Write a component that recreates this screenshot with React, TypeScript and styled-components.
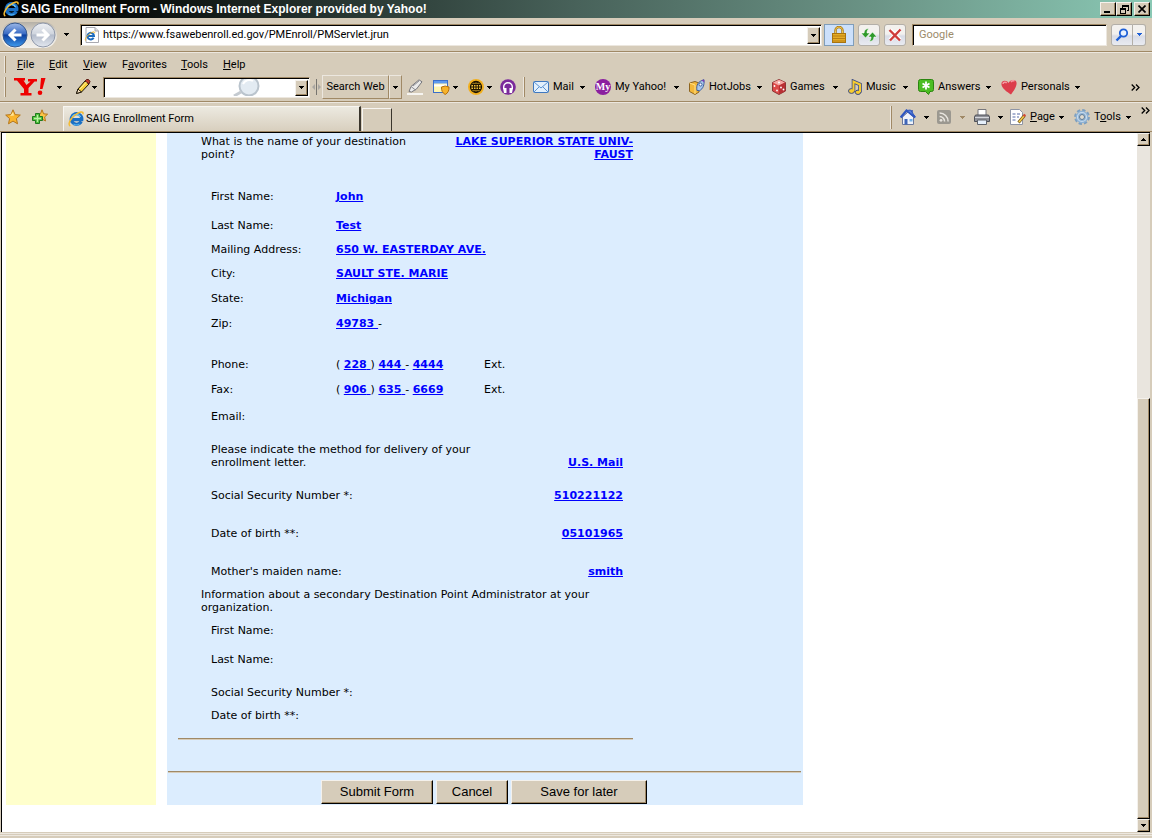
import React from "react";
import styled, { createGlobalStyle, css } from "styled-components";

const face = "#d6ccba";
const shade = "#a08966";
const light = "#ece7df";
const ui = `Roboto, "Liberation Sans", sans-serif`;
const verdana = `Verdana, "DejaVu Sans", sans-serif`;

const Global = createGlobalStyle`
  * { box-sizing: border-box; }
  body { margin: 0; background: ${face}; }
  button, input { font: inherit; color: inherit; margin: 0; padding: 0; border-radius: 0; }
  svg { display: block; flex: none; }
`;

const Window = styled.div`
  min-height: 100vh;
  display: flex;
  flex-direction: column;
  background: ${face};
  color: #000;
  font: 11px/16px ${ui};
`;

/* ---------- window chrome ---------- */

const TitleBar = styled.header`
  display: flex;
  align-items: center;
  height: 18px;
  padding: 0 2px 0 3px;
  gap: 2px;
  background: linear-gradient(90deg, #000 0, #0a0e0c 12%, #48625a 50%, #6b9486 76%, #8ac8b4 100%);
  color: #fff;
`;

const Title = styled.h1`
  flex: 1;
  margin: 0;
  font: bold 12px/16px "Liberation Sans", Arial, sans-serif;
  white-space: nowrap;
`;

const raised = css`
  background: ${face};
  border: 1px solid;
  border-color: #f4f1ec #000 #000 #f4f1ec;
  box-shadow: inset -1px -1px 0 ${shade};
`;

const CaptionButton = styled.button<{ $gap?: boolean }>`
  ${raised}
  display: flex;
  align-items: center;
  justify-content: center;
  width: 16px;
  height: 14px;
  margin-left: ${(p) => (p.$gap ? 0 : -2)}px;
`;

const rule = css`
  border-bottom: 1px solid ${shade};
  box-shadow: 0 1px 0 ${light};
`;

const AddressBar = styled.div`
  ${rule}
  display: flex;
  align-items: center;
  height: 34px;
  padding: 0 6px 0 1px;
`;

const NavPill = styled.div`
  display: flex;
  gap: 2px;
  padding: 0 1px;
  border-radius: 14px;
  background: linear-gradient(#b5b0a6, #e4e0d9 50%, #f3f1ed);
`;

const PlainButton = styled.button<{ $ml?: number; $w?: number }>`
  display: flex;
  align-items: center;
  justify-content: center;
  flex: none;
  width: ${(p) => (p.$w ? p.$w + "px" : "auto")};
  margin-left: ${(p) => p.$ml ?? 0}px;
  background: none;
  border: 0;
`;

const sunken = css`
  background: #fff;
  border: 1px solid;
  border-color: ${shade} ${light} ${light} ${shade};
  box-shadow: inset 1px 1px 0 #000;
`;

const Field = styled.div<{ $grow?: boolean; $w?: number; $h?: number; $ml?: number }>`
  ${sunken}
  display: flex;
  align-items: center;
  flex: ${(p) => (p.$grow ? "1 1 0" : "none")};
  min-width: 0;
  width: ${(p) => (p.$w ? p.$w + "px" : "auto")};
  height: ${(p) => p.$h ?? 22}px;
  margin-left: ${(p) => p.$ml ?? 0}px;
  padding: 2px 1px 1px 3px;
`;

const TextBox = styled.input`
  flex: 1;
  min-width: 0;
  height: 16px;
  padding-left: 3px;
  border: 0;
  outline: 0;
  background: transparent;
  &::placeholder { color: #9c8b6b; opacity: 1; }
`;

const GlassMark = styled.span`
  margin-right: 34px;
`;

const DropButton = styled.button`
  ${raised}
  display: flex;
  align-items: center;
  justify-content: center;
  align-self: stretch;
  width: 13px;
`;

const LockButton = styled.button`
  display: flex;
  align-items: center;
  justify-content: center;
  width: 30px;
  height: 22px;
  margin: 0 4px 0 2px;
  background: #cce0fb;
  border: 1px solid #7f9db9;
`;

const GlossButton = styled.button<{ $w?: number; $ml?: number; $side?: "l" | "r" }>`
  display: flex;
  align-items: center;
  justify-content: center;
  width: ${(p) => p.$w ?? 22}px;
  height: 22px;
  margin-left: ${(p) => p.$ml ?? 0}px;
  border: 1px solid #b3afa8;
  border-left-width: ${(p) => (p.$side === "r" ? 0 : 1)}px;
  border-radius: ${(p) => (p.$side === "l" ? "3px 0 0 3px" : p.$side === "r" ? "0 3px 3px 0" : "3px")};
  background: linear-gradient(#f3f1ee 0 45%, #d9dce6 55%, #e9ebf1);
`;

const MenuBar = styled.nav`
  display: flex;
  align-items: center;
  height: 25px;
  padding-left: 4px;
`;

const Grip = styled.span<{ $h?: number; $ml?: number }>`
  flex: none;
  width: 2px;
  height: ${(p) => p.$h ?? 17}px;
  margin-left: ${(p) => p.$ml ?? 0}px;
  border-left: 1px solid ${light};
  border-right: 1px solid ${shade};
`;

const MenuItem = styled.button<{ $w: number }>`
  width: ${(p) => p.$w}px;
  border: 0;
  background: none;
  text-align: left;
`;

const MenuItems = styled.div`
  display: flex;
  padding-left: 11px;
`;

const YahooBar = styled.div`
  ${rule}
  display: flex;
  align-items: center;
  height: 25px;
  padding: 0 12px 4px 4px;
`;

const Services = styled.div`
  display: flex;
  padding-left: 8px;
`;

const ToolItem = styled.button<{ $w: number }>`
  display: flex;
  align-items: center;
  gap: 4px;
  width: ${(p) => p.$w}px;
  padding-right: 10px;
  border: 0;
  background: none;
  white-space: nowrap;
  svg:last-child { margin-left: auto; }
`;

const EtchedButton = styled.button<{ $w: number; $ml?: number }>`
  display: flex;
  align-items: center;
  justify-content: center;
  flex: none;
  width: ${(p) => p.$w}px;
  height: 24px;
  margin-left: ${(p) => p.$ml ?? 0}px;
  border: 1px solid;
  border-color: ${light} ${shade} ${shade} ${light};
  background: none;
  white-space: nowrap;
`;

const Chevron = styled.button<{ $top?: boolean }>`
  align-self: ${(p) => (p.$top ? "flex-start" : "auto")};
  padding-top: ${(p) => (p.$top ? 4 : 0)}px;
  margin-left: auto;
  border: 0;
  background: none;
`;

const TabBar = styled.div`
  display: flex;
  align-items: flex-end;
  height: 30px;
  padding: 0 2px 0 5px;
  border-bottom: 1px solid ${shade};
`;

const BarSide = styled.div`
  display: flex;
  align-items: center;
  height: 28px;
  &:first-child { gap: 11px; padding-right: 15px; }
  &:last-child { margin-left: auto; }
`;

const Tab = styled.button<{ $w: number; $h: number; $active?: boolean }>`
  display: flex;
  align-items: center;
  gap: 2px;
  width: ${(p) => p.$w}px;
  height: ${(p) => p.$h}px;
  padding-left: 4px;
  margin-right: ${(p) => (p.$active ? 1 : 0)}px;
  border: 1px solid;
  border-color: #f7f5f1 #3a352c transparent #f7f5f1;
  border-right-width: ${(p) => (p.$active ? 2 : 1)}px;
  border-bottom: 0;
  background: ${(p) => (p.$active ? "linear-gradient(#ece9e0, #d8cfbe)" : face)};
`;

/* ---------- page ---------- */

const Viewport = styled.div`
  flex: 1;
  display: flex;
  margin: 0 2px 0 1px;
  border-top: 1px solid #000;
  border-left: 1px solid #000;
  background: #fff;
`;

const Page = styled.main`
  flex: 1;
  display: flex;
  gap: 11px;
  min-width: 0;
  padding: 0 0 27px 4px;
  font: 11px/13px ${verdana};
`;

const SideColumn = styled.aside`
  flex: 0 0 150px;
  background: #ffc;
`;

const Panel = styled.form`
  flex: 0 1 636px;
  min-width: 0;
  padding: 2px 2px 1px 1px;
  background: #dcedfe;
`;

const Section = styled.section`
  max-width: 465px;
  padding: 0 0 0 10px;
`;

const Question = styled.div<{ $gap?: number; $inset?: number }>`
  display: flex;
  justify-content: space-between;
  align-items: flex-end;
  margin: ${(p) => p.$gap ?? 0}px ${(p) => p.$inset ?? 0}px 0 ${(p) => (p.$inset ? 33 : 23)}px;
`;

const Prompt = styled.span<{ $w?: number }>`
  width: ${(p) => (p.$w ? p.$w + "px" : "auto")};
`;

const Answer = styled.span<{ $w?: number }>`
  width: ${(p) => (p.$w ? p.$w + "px" : "auto")};
  text-align: right;
`;

const Link = styled.a`
  color: #00f;
  font-weight: bold;
  text-decoration: underline;
`;

const FieldRow = styled.div<{ $gap: number }>`
  display: grid;
  grid-template-columns: 125px 148px 1fr;
  margin: ${(p) => p.$gap}px 0 0 33px;
  white-space: nowrap;
`;

const Rule = styled.hr<{ $gap: number }>`
  height: 2px;
  margin: ${(p) => p.$gap}px 0 0;
  border: 0;
  border-top: 1px solid ${shade};
  background: ${face};
`;

const Actions = styled.div`
  display: flex;
  gap: 3px;
  padding: 7px 0 0 153px;
`;

const ActionButton = styled.button<{ $w: number }>`
  ${raised}
  width: ${(p) => p.$w}px;
  height: 24px;
  font: 13px/20px "Liberation Sans", Arial, sans-serif;
`;

const ScrollBar = styled.div`
  flex: none;
  display: flex;
  flex-direction: column;
  width: 13px;
  background: #e9e5de;
`;

const ScrollButton = styled.button`
  ${raised}
  display: flex;
  align-items: center;
  justify-content: center;
  height: 13px;
`;

const ScrollThumb = styled.div`
  ${raised}
  flex: 420 1 0;
`;

const ScrollSpace = styled.div`
  flex: 252 1 0;
`;

const StatusEdge = styled.footer`
  height: 6px;
  border-top: 1px solid ${face};
  background: linear-gradient(${light} 0 1px, ${face} 1px 2px, ${light} 2px 3px, ${face} 3px);
`;

/* ---------- icons ---------- */

const Arrow = ({ color = "#000", up = false }: { color?: string; up?: boolean }) => (
  <svg width="5" height="3" viewBox="0 0 5 3" shapeRendering="crispEdges">
    <path d={up ? "M2 0h1v1h1v1h1v1H0V2h1V1h1z" : "M0 0h5v1H4v1H3v1H2V2H1V1H0z"} fill={color} />
  </svg>
);

const IeIcon = () => (
  <svg width="16" height="16" viewBox="0 0 16 16">
    <path d="M13.200 10.500A5.300 5.300 0 1 1 13.800 8.600H5" fill="none" stroke="#1a6fc4" strokeWidth="3.200" />
    <path d="M12.600 5.800A5 5 0 0 0 4 6.200" fill="none" stroke="#6cc6f7" strokeWidth="1.400" />
    <path d="M5.500 13a5.500 5.500 0 0 0 6 0" fill="none" stroke="#4fb0ee" strokeWidth="1.200" />
    <path d="M2.300 15C-.6 13.600 2.400 7.400 7 4c4.200-3.200 8.900-4.600 7.900-.6" fill="none" stroke="#f5bb30" strokeWidth="1.500" />
  </svg>
);

const RoundArrow = ({ back }: { back?: boolean }) => (
  <svg width="26" height="26" viewBox="0 0 26 26">
    <defs>
      <linearGradient id={back ? "navBack" : "navNext"} x1="0" y1="0" x2="0" y2="1">
        <stop offset="0" stopColor={back ? "#9db9e8" : "#eef0f4"} />
        <stop offset=".45" stopColor={back ? "#3a6bc4" : "#d0d5de"} />
        <stop offset=".5" stopColor={back ? "#0d3f9e" : "#b4bccb"} />
        <stop offset="1" stopColor={back ? "#3f9df0" : "#e3e8f0"} />
      </linearGradient>
    </defs>
    <circle cx="13" cy="13" r="12" fill={`url(#${back ? "navBack" : "navNext"})`} stroke={back ? "#35588f" : "#8f98aa"} />
    <path
      d={back ? "M19.500 13H8M13.500 7.500L8 13l5.500 5.500" : "M6.500 13H18M12.500 7.500L18 13l-5.500 5.500"}
      fill="none"
      stroke="#fff"
      strokeWidth="3"
    />
  </svg>
);

const PageIeIcon = () => (
  <svg width="16" height="16" viewBox="0 0 16 16">
    <path d="M2 .5h9l3.500 3.500v11.500H2z" fill="#fff" stroke="#a9a9b0" />
    <path d="M11 .5V4h3.500" fill="#ddd" stroke="#a9a9b0" />
    <path d="M9.600 10.700A3.300 3.300 0 1 1 10 9H4" fill="none" stroke="#1c6cc0" strokeWidth="2" />
    <path d="M1.500 13.500c-1-2 3-7 7.500-8.500 1.500-.4 2 .2 1.500 1.300" fill="none" stroke="#f0b32a" />
  </svg>
);

const LockIcon = () => (
  <svg width="14" height="17" viewBox="0 0 14 17">
    <path d="M3.500 8V4.500a3.500 3.500 0 0 1 7 0V8" fill="none" stroke="#a87410" strokeWidth="2.400" />
    <path d="M3.500 8V4.500a3.500 3.500 0 0 1 7 0V8" fill="none" stroke="#f1c850" />
    <rect x=".5" y="7.500" width="13" height="9" fill="#e5ac24" stroke="#a87410" />
    <path d="M1 10h12M1 12.500h12M1 15h12" stroke="#b97f12" />
  </svg>
);

const RefreshIcon = () => (
  <svg width="18" height="16" viewBox="0 0 18 16">
    <path d="M9 1.500C6 1.500 4 3 4 6H1l4.500 5L10 6H7c0-2 .5-3 2-4.500z" fill="#2e9a2b" stroke="#fff" strokeWidth=".6" />
    <path d="M9 14.500c3 0 5-1.500 5-4.500h3l-4.500-5L8 10h3c0 2-.5 3-2 4.500z" fill="#2e9a2b" stroke="#fff" strokeWidth=".6" />
  </svg>
);

const StopIcon = () => (
  <svg width="14" height="14" viewBox="0 0 14 14">
    <path d="M2 2l10 10M12 2L2 12" stroke="#fff" strokeWidth="4" />
    <path d="M1.500 2l10.500 10.500M12.500 1.500L2 12.500" stroke="#cf3b3b" strokeWidth="2.400" />
  </svg>
);

const GlassIcon = () => (
  <svg width="14" height="14" viewBox="0 0 14 14">
    <circle cx="8.500" cy="5" r="3.700" fill="#e8f2ff" stroke="#1d5fd6" strokeWidth="1.800" />
    <path d="M6 8l-4.500 4.500" stroke="#1d5fd6" strokeWidth="2.400" />
  </svg>
);

const YahooLogo = () => (
  <svg width="32" height="18" viewBox="0 0 32 18">
    <path
      d="M0 0h11v2.500H9.500l3 4.500L16.500 3.500H14V1h9v2.500h-2.500L14.500 10v5h3v2.500H6.500V15h3.500v-4L3 2.500H0z"
      fill="#ee0000"
    />
    <path d="M27 0h4.500L28.500 11H26z" fill="#ee0000" />
    <ellipse cx="26" cy="14.800" rx="2.300" ry="2.200" fill="#ee0000" />
  </svg>
);

const PencilIcon = () => (
  <svg width="16" height="16" viewBox="0 0 16 16">
    <path d="M1.500 14.500l1.500-4.500L10 2l4 3-7.500 8z" fill="#f8cf38" stroke="#1c1408" />
    <path d="M10 2l1.500-1.500h2L15 2.500 14 5z" fill="#c23a2a" stroke="#5a1a10" />
    <path d="M1.500 14.500l1.500-4.500 3.500 3z" fill="#f5dfc0" stroke="#1c1408" />
    <path d="M4.500 10.500l7-7.500" stroke="#fff3a0" />
  </svg>
);

const SoftGlass = () => (
  <svg width="28" height="17" viewBox="0 0 28 17">
    <circle cx="16" cy="7" r="9.500" fill="#e3ebf2" stroke="#bac4cd" strokeWidth="2" />
    <path d="M10 5a7 7 0 0 1 10-3" fill="none" stroke="#fff" strokeWidth="2" />
    <path d="M8 13l-7 4" stroke="#c4cad0" strokeWidth="3" />
  </svg>
);

const SplitIcon = () => (
  <svg width="9" height="18" viewBox="0 0 9 18">
    <path d="M4.500 1v16" stroke="#77756f" />
    <path d="M3 6v6L0 9zM6 6v6l3-3z" fill="#aaa7a2" />
  </svg>
);

const HighlightIcon = () => (
  <svg width="16" height="16" viewBox="0 0 16 16">
    <path d="M2 12.500l2-5L12 .8l3 2L9.500 10l-5 3z" fill="#eaeaea" stroke="#77777c" />
    <path d="M4 7.500l4.500 3.500M6 7l6-5" stroke="#8e8e94" />
    <path d="M0 15h16" stroke="#f6f4f0" strokeWidth="2" />
  </svg>
);

const ShieldWindowIcon = () => (
  <svg width="17" height="16" viewBox="0 0 17 16">
    <rect x=".5" y="1.500" width="14" height="12" fill="#fdf4b0" stroke="#3b6ec9" />
    <path d="M1 2h13v2.500H1z" fill="#5e9af0" />
    <path d="M1 5.500h13v2H1z" fill="#fff" />
    <path d="M8.500 8l3.700-1 3.800 1c.2 3.500-1 6-3.800 7.500C9.500 14 8.300 11.500 8.500 8z" fill="#f7b32b" stroke="#b36f0c" />
  </svg>
);

const GlobeIcon = () => (
  <svg width="16" height="16" viewBox="0 0 16 16">
    <circle cx="8" cy="8" r="8" fill="#f2b01e" />
    <circle cx="8" cy="8" r="5.500" fill="#f7c53a" stroke="#1c1300" strokeWidth="1.300" />
    <path d="M8 2.500v11M2.500 8h11M3.500 5.500h9M3.500 10.500h9" stroke="#1c1300" />
    <ellipse cx="8" cy="8" rx="2.600" ry="5.500" fill="none" stroke="#1c1300" />
  </svg>
);

const HeadphoneIcon = () => (
  <svg width="16" height="16" viewBox="0 0 16 16">
    <circle cx="8" cy="8" r="7.800" fill="#7b2a9b" />
    <path d="M3.700 10V8a4.300 4.300 0 0 1 8.600 0v2" fill="none" stroke="#fff" strokeWidth="1.400" />
    <path d="M3 9h3.500v5H4zM13 9H9.500v5H12z" fill="#fff" />
  </svg>
);

const MailIcon = () => (
  <svg width="16" height="12" viewBox="0 0 16 12">
    <rect x=".5" y=".5" width="15" height="11" rx="1" fill="#e2f0fd" stroke="#3f78c0" />
    <path d="M1 1l7 6 7-6M1 11l5-5M15 11l-5-5" fill="none" stroke="#5b92d2" />
  </svg>
);

const MyIcon = () => (
  <svg width="16" height="16" viewBox="0 0 16 16">
    <circle cx="8" cy="8" r="8" fill="#8b1f9f" />
    <text x="8" y="11" fill="#fff" fontFamily="Liberation Serif, serif" fontWeight="bold" fontSize="10" textAnchor="middle">My</text>
  </svg>
);

const JobsIcon = () => (
  <svg width="16" height="16" viewBox="0 0 16 16">
    <path d="M.5 4L6 2.500 10 4v9l-4 2.500-5.500-3z" fill="#f3b738" stroke="#8d6420" />
    <path d="M.5 4L6 6v9" fill="none" stroke="#ffe08a" />
    <path d="M8 11.500C7 6 9 2.500 15 .7c.5 5-.8 9-4.500 11z" fill="#a9c8ec" stroke="#3d5f9d" />
    <circle cx="11.500" cy="5.500" r="1.500" fill="#fff" stroke="#3d5f9d" />
    <path d="M14.900.5l.6 3-3-2z" fill="#7b3db5" />
  </svg>
);

const DiceIcon = () => (
  <svg width="14" height="16" viewBox="0 0 14 16">
    <path d="M7 .5l6.500 3v8.500L7 15.500.5 12V3.500z" fill="#dc4a48" stroke="#8d3436" />
    <path d="M7 .7l6 2.800L7 6.500 1 3.500z" fill="#f6a8a4" />
    <path d="M7 6.500l6-3V12l-6 3.200z" fill="#b92f33" />
    <g fill="#fff">
      <circle cx="7" cy="3.500" r="1" />
      <circle cx="2.500" cy="7" r=".9" />
      <circle cx="5" cy="11.500" r=".9" />
      <circle cx="9" cy="8.500" r=".9" />
      <circle cx="11.500" cy="10.500" r=".9" />
    </g>
  </svg>
);

const MusicIcon = () => (
  <svg width="14" height="16" viewBox="0 0 14 16">
    <path d="M5.500 12.500V2.500l6.500 3v8" fill="none" stroke="#3c4c84" strokeWidth="3.600" />
    <ellipse cx="3.500" cy="12" rx="3" ry="2.400" fill="#f8cc2e" stroke="#3c4c84" />
    <ellipse cx="10" cy="13.300" rx="2.700" ry="2.200" fill="#f8cc2e" stroke="#3c4c84" />
    <path d="M5.500 12V2.500l6.500 3V13" fill="none" stroke="#f8cc2e" strokeWidth="2" />
  </svg>
);

const AnswersIcon = () => (
  <svg width="16" height="16" viewBox="0 0 16 16">
    <path d="M2.500.5h11a2 2 0 0 1 2 2v8a2 2 0 0 1-2 2H12l-1.500 3-3-3h-5a2 2 0 0 1-2-2v-8a2 2 0 0 1 2-2z" fill="#4bbd22" stroke="#2b8510" />
    <path d="M8 2.500v8M4.500 4.500l7 4M11.500 4.500l-7 4" stroke="#fff" strokeWidth="1.800" />
  </svg>
);

const HeartIcon = () => (
  <svg width="16" height="16" viewBox="0 0 16 16">
    <path d="M10 15.500C6 13 .5 9 .4 5 .4 1 6 .6 7.500 4 9 .4 15.500-.5 15.600 4c0 4-3 8-5.600 11.500z" fill="#dc3d4b" />
    <path d="M2 5c.3-2 2.500-2.300 3.800-1M10 3c1-1.500 2.500-1.500 3.500-1" fill="none" stroke="#f69aa2" strokeWidth="1.600" />
  </svg>
);

const StarIcon = () => (
  <svg width="16" height="16" viewBox="0 0 16 16">
    <path d="M8 .8l2.100 4.800 5.200.5-3.900 3.500 1.100 5.200L8 12.100l-4.500 2.700 1.100-5.200L.7 6.100l5.200-.5z" fill="#fbb52c" stroke="#b5761a" />
    <path d="M8 3l1 3.500-4 .5z" fill="#ffe69a" />
  </svg>
);

const AddStarIcon = () => (
  <svg width="16" height="16" viewBox="0 0 16 16">
    <path d="M10 .8l1.600 4 4 .4-3 2.700.9 4.100-3.500-2-4 2L7 8 4.500 5.200l4-.4z" fill="#fbc545" stroke="#b5761a" />
    <path d="M3.500 4.500h4v3h3v4h-3v3h-4v-3h-3v-4h3z" fill="#4fc23c" stroke="#1e7a1c" />
    <path d="M5.500 6v7M2 9.500h7" stroke="#b8f0a2" strokeWidth="1.300" />
  </svg>
);

const HomeIcon = () => (
  <svg width="16" height="16" viewBox="0 0 16 16">
    <path d="M2.500 8v7.500h11V8L8 3z" fill="#f1f3fa" stroke="#6a789c" />
    <path d="M12 1v4.500" stroke="#5a6fb0" strokeWidth="2" />
    <path d="M.7 8.500L6.500 1.500 15.300 8.500" fill="none" stroke="#2f56c0" strokeWidth="2.200" />
    <path d="M6.500 1.500l4-.5L15 7.500z" fill="#5a82dc" stroke="#2f56c0" />
    <path d="M4.500 10h3v5.500h-3z" fill="#3f66b8" />
    <path d="M9.500 10h3v2.500h-3z" fill="#6fb0e8" />
  </svg>
);

const FeedIcon = () => (
  <svg width="14" height="14" viewBox="0 0 14 14">
    <rect width="14" height="14" rx="2" fill="#9b9890" />
    <circle cx="4" cy="10.300" r="1.400" fill="#e9e6e0" />
    <path d="M2.600 6.500a5 5 0 0 1 5 5M2.600 3a8.500 8.500 0 0 1 8.500 8.500" fill="none" stroke="#e9e6e0" strokeWidth="1.500" />
  </svg>
);

const PrinterIcon = () => (
  <svg width="16" height="16" viewBox="0 0 16 16">
    <path d="M4 .5h8V7H4z" fill="#fff" stroke="#77777c" />
    <path d="M1.500 6h13l1 2v4.500H.5V8z" fill="#8f9198" stroke="#4f5158" />
    <path d="M1 8.500h14" stroke="#d4d6dc" />
    <path d="M3.500 11h9v4.500h-9z" fill="#e6f0fb" stroke="#60646c" />
  </svg>
);

const PageEditIcon = () => (
  <svg width="16" height="16" viewBox="0 0 16 16">
    <path d="M.5.500h9l3 3v12H.5z" fill="#fff" stroke="#8e95a5" />
    <path d="M2.500 5h3M2.500 8h3M2.500 11h3M7 5h3M7 8h2" stroke="#8f9cc4" strokeWidth="1.300" />
    <path d="M8.500 13.500l6-7" stroke="#7b5c1d" strokeWidth="3" />
    <path d="M9 13l5-6" stroke="#f7cf4a" strokeWidth="1.400" />
    <path d="M13.600 7.300L15.300 5.500" stroke="#d34b3a" strokeWidth="2.400" />
  </svg>
);

const GearIcon = () => (
  <svg width="16" height="16" viewBox="0 0 16 16">
    <circle cx="8" cy="8" r="6.800" fill="none" stroke="#7d9fc0" strokeWidth="2.200" strokeDasharray="3.340 2" />
    <circle cx="8" cy="8" r="4.500" fill="none" stroke="#8fb2d4" strokeWidth="3.400" />
    <circle cx="8" cy="8" r="4.500" fill="none" stroke="#c9dcee" strokeWidth="1.200" />
    <circle cx="8" cy="8" r="2.500" fill="#e2dccf" stroke="#567a9e" />
  </svg>
);

const DoubleChevron = () => (
  <svg width="9" height="7" viewBox="0 0 9 7">
    <path d="M.7.500l3 3-3 3M5 .5l3 3-3 3" fill="none" stroke="#000" strokeWidth="1.300" />
  </svg>
);

const MinimizeIcon = () => (
  <svg width="8" height="8" viewBox="0 0 8 8"><path d="M0 6h6v2H0z" /></svg>
);
const RestoreIcon = () => (
  <svg width="9" height="9" viewBox="0 0 9 9" shapeRendering="crispEdges">
    <path d="M2 0h7v6H7V5h1V2H3v1H2zM0 3h6v6H0zM1 5v3h4V5z" fillRule="evenodd" />
  </svg>
);
const CloseIcon = () => (
  <svg width="8" height="8" viewBox="0 0 8 8"><path d="M.5.500l7 7M7.500.500l-7 7" stroke="#000" strokeWidth="1.700" /></svg>
);

/* ---------- data ---------- */

const menus = [
  { pre: "", key: "F", post: "ile", w: 32 },
  { pre: "", key: "E", post: "dit", w: 34 },
  { pre: "", key: "V", post: "iew", w: 39 },
  { pre: "F", key: "a", post: "vorites", w: 59 },
  { pre: "", key: "T", post: "ools", w: 42 },
  { pre: "", key: "H", post: "elp", w: 40 },
];

const services = [
  { label: "Mail", icon: <MailIcon />, w: 62 },
  { label: "My Yahoo!", icon: <MyIcon />, w: 94 },
  { label: "HotJobs", icon: <JobsIcon />, w: 83 },
  { label: "Games", icon: <DiceIcon />, w: 76 },
  { label: "Music", icon: <MusicIcon />, w: 70 },
  { label: "Answers", icon: <AnswersIcon />, w: 83 },
  { label: "Personals", icon: <HeartIcon />, w: 89 },
];

const L = ({ children }: { children: React.ReactNode }) => <Link href="#">{children}</Link>;

const PhoneNumber = ({ parts }: { parts: [string, string, string] }) => (
  <span>
    ( <L>{parts[0]}&nbsp;</L>) <L>{parts[1]}&nbsp;</L>- <L>{parts[2]}</L>
  </span>
);

const contact: { label: string; value?: React.ReactNode; ext?: boolean; gap: number }[] = [
  { label: "First Name:", value: <L>John</L>, gap: 29 },
  { label: "Last Name:", value: <L>Test</L>, gap: 16 },
  { label: "Mailing Address:", value: <L>650 W. EASTERDAY AVE.</L>, gap: 11 },
  { label: "City:", value: <L>SAULT STE. MARIE</L>, gap: 11 },
  { label: "State:", value: <L>Michigan</L>, gap: 12 },
  { label: "Zip:", value: <span><L>49783&nbsp;</L>-</span>, gap: 12 },
  { label: "Phone:", value: <PhoneNumber parts={["228", "444", "4444"]} />, ext: true, gap: 28 },
  { label: "Fax:", value: <PhoneNumber parts={["906", "635", "6669"]} />, ext: true, gap: 12 },
  { label: "Email:", gap: 14 },
];

const identity = [
  { label: "Social Security Number *:", value: "510221122", gap: 20 },
  { label: "Date of birth **:", value: "05101965", gap: 25 },
  { label: "Mother's maiden name:", value: "smith", gap: 25 },
];

const secondary = [
  { label: "First Name:", gap: 10 },
  { label: "Last Name:", gap: 16 },
  { label: "Social Security Number *:", gap: 20 },
  { label: "Date of birth **:", gap: 10 },
];

export default function App() {
  return (
    <Window>
      <Global />
      <TitleBar>
        <IeIcon />
        <Title>SAIG Enrollment Form - Windows Internet Explorer provided by Yahoo!</Title>
        <CaptionButton aria-label="Minimize"><MinimizeIcon /></CaptionButton>
        <CaptionButton aria-label="Restore"><RestoreIcon /></CaptionButton>
        <CaptionButton aria-label="Close" $gap><CloseIcon /></CaptionButton>
      </TitleBar>

      <AddressBar>
        <NavPill>
          <PlainButton aria-label="Back"><RoundArrow back /></PlainButton>
          <PlainButton aria-label="Forward"><RoundArrow /></PlainButton>
        </NavPill>
        <PlainButton aria-label="Recent pages" $ml={5} $w={8}><Arrow /></PlainButton>
        <Field $grow $ml={10}>
          <PageIeIcon />
          <TextBox aria-label="Address" defaultValue="https://www.fsawebenroll.ed.gov/PMEnroll/PMServlet.jrun" />
          <DropButton aria-label="Show address list"><Arrow /></DropButton>
        </Field>
        <LockButton aria-label="Security report"><LockIcon /></LockButton>
        <GlossButton aria-label="Refresh"><RefreshIcon /></GlossButton>
        <GlossButton aria-label="Stop" $ml={4}><StopIcon /></GlossButton>
        <Field $w={195} $ml={6}>
          <TextBox aria-label="Search" placeholder="Google" />
        </Field>
        <GlossButton aria-label="Search" $ml={4} $side="l"><GlassIcon /></GlossButton>
        <GlossButton aria-label="Search options" $w={13} $side="r"><Arrow color="#1d5fd6" /></GlossButton>
      </AddressBar>

      <MenuBar>
        <Grip />
        <MenuItems>
          {menus.map((m) => (
            <MenuItem key={m.key} $w={m.w}>{m.pre}<u>{m.key}</u>{m.post}</MenuItem>
          ))}
        </MenuItems>
      </MenuBar>

      <YahooBar>
        <Grip $h={20} />
        <PlainButton aria-label="Yahoo" $ml={8}><YahooLogo /></PlainButton>
        <PlainButton aria-label="Yahoo menu" $w={27}><Arrow /></PlainButton>
        <PlainButton aria-label="Edit toolbar" $ml={2}><PencilIcon /></PlainButton>
        <PlainButton aria-label="Edit options" $w={7}><Arrow /></PlainButton>
        <Field $w={207} $h={21} $ml={5}>
          <TextBox aria-label="Yahoo search" />
          <GlassMark><SoftGlass /></GlassMark>
          <DropButton aria-label="Search history"><Arrow /></DropButton>
        </Field>
        <PlainButton aria-label="Resize search" $ml={2} $w={9}><SplitIcon /></PlainButton>
        <EtchedButton $w={67} $ml={1}>Search Web</EtchedButton>
        <EtchedButton $w={13} aria-label="Search Web options"><Arrow /></EtchedButton>
        <PlainButton aria-label="Highlight" $ml={5}><HighlightIcon /></PlainButton>
        <PlainButton aria-label="Pop-up blocker" $ml={10}><ShieldWindowIcon /></PlainButton>
        <PlainButton aria-label="Pop-up options" $w={11}><Arrow /></PlainButton>
        <PlainButton aria-label="Translate" $ml={7}><GlobeIcon /></PlainButton>
        <PlainButton aria-label="Translate options" $w={11}><Arrow /></PlainButton>
        <PlainButton aria-label="Audio" $ml={5}><HeadphoneIcon /></PlainButton>
        <Grip $h={20} $ml={7} />
        <Services>
          {services.map((s) => (
            <ToolItem key={s.label} $w={s.w}>{s.icon}{s.label}<Arrow /></ToolItem>
          ))}
        </Services>
        <Chevron aria-label="More"><DoubleChevron /></Chevron>
      </YahooBar>

      <TabBar>
        <BarSide>
          <PlainButton aria-label="Favorites Center"><StarIcon /></PlainButton>
          <PlainButton aria-label="Add to Favorites"><AddStarIcon /></PlainButton>
        </BarSide>
        <Tab $w={298} $h={25} $active><IeIcon />SAIG Enrollment Form</Tab>
        <Tab $w={30} $h={23} aria-label="New Tab" />
        <BarSide>
          <Grip $h={23} />
          <PlainButton aria-label="Home" $ml={8}><HomeIcon /></PlainButton>
          <PlainButton aria-label="Home options" $w={21}><Arrow /></PlainButton>
          <PlainButton aria-label="Feeds"><FeedIcon /></PlainButton>
          <PlainButton aria-label="Feed options" $w={23}><Arrow color={shade} /></PlainButton>
          <PlainButton aria-label="Print"><PrinterIcon /></PlainButton>
          <PlainButton aria-label="Print options" $w={20}><Arrow /></PlainButton>
          <ToolItem $w={64}><PageEditIcon /><span><u>P</u>age</span><Arrow /></ToolItem>
          <ToolItem $w={67}><GearIcon /><span>T<u>o</u>ols</span><Arrow /></ToolItem>
          <Chevron aria-label="More commands" $top><DoubleChevron /></Chevron>
        </BarSide>
      </TabBar>

      <Viewport>
        <Page>
          <SideColumn />
          <Panel onSubmit={(e) => e.preventDefault()}>
            <Section>
              <Question>
                <Prompt $w={230}>What is the name of your destination point?</Prompt>
                <Answer $w={200}><L>LAKE SUPERIOR STATE UNIV-FAUST</L></Answer>
              </Question>
              {contact.map((c) => (
                <FieldRow key={c.label} $gap={c.gap}>
                  <span>{c.label}</span>
                  <span>{c.value}</span>
                  {c.ext && <span>Ext.</span>}
                </FieldRow>
              ))}
              <Question $gap={20} $inset={10}>
                <Prompt $w={290}>Please indicate the method for delivery of your enrollment letter.</Prompt>
                <Answer><L>U.S. Mail</L></Answer>
              </Question>
              {identity.map((i) => (
                <Question key={i.label} $gap={i.gap} $inset={10}>
                  <Prompt>{i.label}</Prompt>
                  <Answer><L>{i.value}</L></Answer>
                </Question>
              ))}
              <Question $gap={10}>
                <Prompt>Information about a secondary Destination Point Administrator at your organization.</Prompt>
              </Question>
              {secondary.map((s) => (
                <Question key={s.label} $gap={s.gap} $inset={10}>
                  <Prompt>{s.label}</Prompt>
                </Question>
              ))}
              <Rule $gap={16} />
            </Section>
            <Rule $gap={31} />
            <Actions>
              <ActionButton type="submit" $w={112}>Submit Form</ActionButton>
              <ActionButton type="button" $w={72}>Cancel</ActionButton>
              <ActionButton type="button" $w={136}>Save for later</ActionButton>
            </Actions>
          </Panel>
        </Page>
        <ScrollBar>
          <ScrollButton aria-label="Scroll up"><Arrow up /></ScrollButton>
          <ScrollSpace />
          <ScrollThumb />
          <ScrollButton aria-label="Scroll down"><Arrow /></ScrollButton>
        </ScrollBar>
      </Viewport>
      <StatusEdge />
    </Window>
  );
}
